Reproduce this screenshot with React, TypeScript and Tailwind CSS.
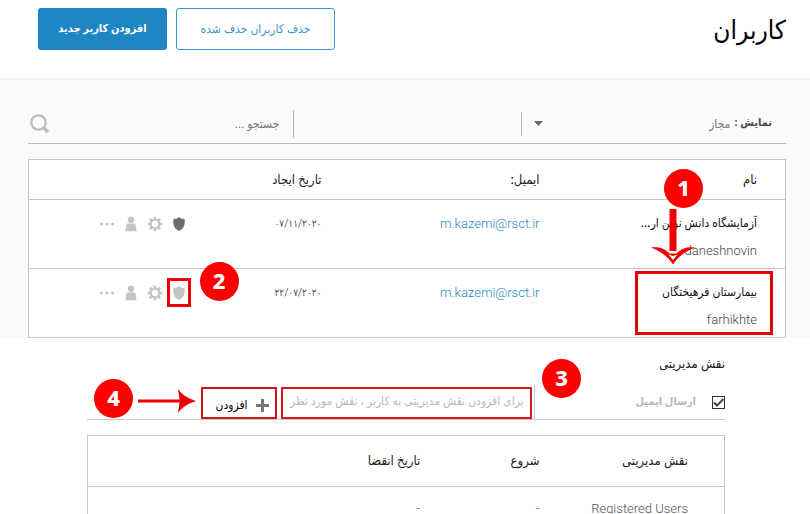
import type { ReactNode } from "react";
import clsx from "clsx";

const users = [
  { name: "آزمایشگاه دانش نوین ار...", login: "daneshnovin", email: "m.kazemi@rsct.ir", created: "۰۷/۱۱/۲۰۲۰", admin: true },
  { name: "بیمارستان فرهیختگان", login: "farhikhte", email: "m.kazemi@rsct.ir", created: "۲۲/۰۷/۲۰۲۰", admin: false },
];

function StepBadge({ className, children }: { className: string; children: ReactNode }) {
  return (
    <span
      className={clsx(
        "absolute z-10 flex size-[39px] items-center justify-center rounded-full bg-[#fe0000] pb-1 font-['Noto_Sans'] text-[22px] leading-none font-extrabold text-white",
        className,
      )}
    >
      {children}
    </span>
  );
}

function ShieldIcon() {
  return (
    <svg viewBox="0 0 12 14" className="h-[14px] w-3" fill="currentColor">
      <path d="M6 0 7.2.9C8.500 1.700 9.800 2 11.600 2.100c.3 2.600.2 5.200-.8 7.500C9.900 11.600 8.300 13 6 14 3.700 13 2.100 11.600 1.200 9.600.2 7.300.1 4.700.4 2.100 2.200 2 3.500 1.700 4.800.9z" />
    </svg>
  );
}

function GearIcon() {
  return (
    <svg viewBox="0 0 16 16" className="size-4">
      <circle cx="8" cy="8" r="4.300" fill="none" stroke="currentColor" strokeWidth="2.300" />
      {[0, 45, 90, 135, 180, 225, 270, 315].map((angle) => (
        <path key={angle} d="M6.600.7h2.800l-.3 2.600H6.900z" fill="currentColor" transform={`rotate(${angle} 8 8)`} />
      ))}
    </svg>
  );
}

function PersonIcon() {
  return (
    <svg viewBox="0 0 12 16" className="h-4 w-3" fill="currentColor">
      <circle cx="6" cy="3.700" r="3.100" />
      <path d="M4.700 6h2.600v1.300H4.700z" />
      <path d="M2.700 7.500h6.600c.7 0 1.100.5 1.300 1.200L11.600 15.300H.4L1.400 8.700c.2-.7.6-1.200 1.300-1.200z" />
    </svg>
  );
}

function DotsIcon() {
  return (
    <svg viewBox="0 0 16 16" className="size-4" fill="currentColor">
      <circle cx="2.500" cy="8" r="1.500" />
      <circle cx="8" cy="8" r="1.500" />
      <circle cx="13.500" cy="8" r="1.500" />
    </svg>
  );
}

function UserRow({ user }: { user: (typeof users)[number] }) {
  return (
    <tr className="border-b border-[#c6c6c6] align-top">
      <td className="relative pt-[10px] pr-7 pb-1">
        <div className="text-xs leading-[27px] font-medium whitespace-nowrap text-[#111]">{user.name}</div>
        <div className="text-[13px] leading-[27px] font-light text-[#444]">{user.login}</div>
        {user.admin ? (
          <>
            <StepBadge className="-top-[31px] right-[82px]">1</StepBadge>
            <svg viewBox="0 0 44 56" className="absolute top-[9px] right-[90px] h-14 w-11">
              <path d="M18.500 0h7v42h-7z" fill="#f00000" />
              <path d="M0 38.500c8-.8 13.500 1 18.500 6h7C30.500 39.500 36 37.700 44 38.500 35 42 28 46.500 22 55.500 16 46.500 9 42 0 38.500z" fill="#f00000" />
              <path d="M17.500 45.500 22 47l4.500-1.500L22 51z" fill="#fff" />
            </svg>
          </>
        ) : (
          <span className="pointer-events-none absolute top-[2px] right-3 h-[64px] w-[138px] border-[3px] border-[#ea0008]" />
        )}
      </td>
      <td className="pt-[10px] pr-7 text-[13px] leading-[27px]">
        <a href="#email" className="font-light text-[#1e87c3]">
          {user.email}
        </a>
      </td>
      <td className="pt-[10px] pr-7 text-[10px] leading-[27px] text-[#555]">{user.created}</td>
      <td className="relative pt-[10px]">
        <div className="flex h-[27px] items-center gap-2 pr-[19px] text-[#c4c4c4]">
          <button aria-label="نقش مدیریتی" className={clsx("flex w-4 justify-center", user.admin && "text-[#6b6f6f]")}>
            <ShieldIcon />
          </button>
          <button aria-label="تنظیمات">
            <GearIcon />
          </button>
          <button aria-label="پروفایل" className="flex w-4 justify-center">
            <PersonIcon />
          </button>
          <button aria-label="بیشتر">
            <DotsIcon />
          </button>
        </div>
        {!user.admin && (
          <>
            <span className="pointer-events-none absolute top-[9px] right-[15px] h-[29px] w-6 border-[3px] border-[#ea0008]" />
            <StepBadge className="-top-[7px] -right-[33px]">2</StepBadge>
          </>
        )}
      </td>
    </tr>
  );
}

export default function App() {
  return (
    <div dir="rtl" className="h-screen overflow-hidden bg-white font-['Roboto','DejaVu_Sans_Condensed','DejaVu_Sans',sans-serif] text-xs text-[#222]">
      <header className="flex items-start justify-between border-b-2 border-[#f0f0f0] pr-6 pb-7 pl-[38px]">
        <h1 className="pt-3 text-[26px] leading-9 font-medium text-black">کاربران</h1>
        <div className="flex gap-[9px] pt-2">
          <button className="h-[42px] w-[159px] rounded-[3px] border border-[#3d97cb] text-xs text-[#3d97cb]">حذف کاربران حذف شده</button>
          <button className="h-[42px] w-[129px] rounded-[3px] bg-[#1e87c3] text-[11px] font-bold text-white">افزودن کاربر جدید</button>
        </div>
      </header>

      <section className="bg-[#fafafa] pt-6 pr-6 pl-7">
        <div className="flex h-10 items-center border-b border-[#b9b9b9]">
          <label className="flex w-[35%] items-center border-l border-[#b9b9b9] pr-[14px] text-[#4a4444]">
            <span className="text-[11px] font-bold">نمایش :</span>
            <select className="h-6 flex-1 appearance-none bg-transparent pr-1 text-xs text-[#777] outline-none">
              <option>مجاز</option>
            </select>
            <svg viewBox="0 0 9 5" className="ml-3 h-[5px] w-[9px]" fill="#666">
              <path d="M0 0h9L4.500 5z" />
            </svg>
          </label>
          <div className="h-7 w-[30%] border-l border-[#b9b9b9]" />
          <input type="search" aria-label="جستجو" placeholder="جستجو ..." className="min-w-0 flex-1 bg-transparent pr-[14px] text-xs outline-none placeholder:text-[#777]" />
          <button aria-label="جستجو" className="ml-[2px]">
            <svg viewBox="0 0 20 20" className="size-5" fill="none" stroke="#bdbdbd">
              <circle cx="8.500" cy="8.500" r="7.200" strokeWidth="2.300" />
              <path d="m14 14 4 4" strokeWidth="3.500" />
            </svg>
          </button>
        </div>

        <table className="mt-[15px] w-full table-fixed border-x border-t border-[#c6c6c6] bg-white text-right">
          <thead>
            <tr className="h-10 border-b border-[#c6c6c6] text-[13px]">
              <th className="w-[28.8%] pr-7 font-medium">نام</th>
              <th className="w-[28.8%] pr-7 font-medium">ایمیل:</th>
              <th className="w-[19%] pr-7 font-medium">تاریخ ایجاد</th>
              <th aria-label="عملیات" />
            </tr>
          </thead>
          <tbody>
            {users.map((user) => (
              <UserRow key={user.login} user={user} />
            ))}
          </tbody>
        </table>
      </section>

      <section className="pt-[14px] pr-[85px] pl-[87px]">
        <h2 className="text-[13px] leading-6 font-medium">نقش مدیریتی</h2>
        <form className="relative mt-[9px] flex h-[35px] items-end border-b border-[#c6c6c6]">
          <label className="flex h-full w-[30%] items-center gap-4 border-l border-[#c6c6c6] text-[11px] font-bold text-[#b8b8b8]">
            <span className="relative flex">
              <input
                type="checkbox"
                defaultChecked
                className="size-[13px] appearance-none border border-[#333] bg-white"
              />
              <svg viewBox="0 0 13 13" className="pointer-events-none absolute inset-0 size-[13px]" fill="none" stroke="#444" strokeWidth="2">
                <path d="m2 6.500 3 3 6.500-6.500" />
              </svg>
            </span>
            ارسال ایمیل
          </label>
          <input
            type="text"
            aria-label="نقش"
            placeholder="برای افزودن نقش مدیریتی به کاربر ، نقش مورد نظر"
            className="mr-[2px] h-8 w-[251px] border-2 border-[#d9151b] pr-[6px] pb-1 text-xs outline-none placeholder:text-[#bababa]"
          />
          <button type="button" className="mr-1 flex h-8 w-[76px] items-center gap-2 border-2 border-[#c9181d] pt-1 pr-[6px] text-xs font-medium text-black">
            <svg viewBox="0 0 13 13" className="size-[13px]" fill="none" stroke="#777" strokeWidth="3">
              <path d="M6.500 0v13M0 6.500h13" />
            </svg>
            افزودن
          </button>
          <StepBadge className="-top-[26px] right-36">3</StepBadge>
          <svg viewBox="0 0 58 24" className="absolute top-1 left-[51px] h-6 w-[58px]" fill="#ef0000">
            <path d="M0 10.500h46v3H0z" />
            <path d="M40 0C44 5.500 49 9 58 12 49 15 44 18.500 40 24c.6-5 1.500-8 1.500-12 0-4-.9-7-1.500-12z" />
          </svg>
          <StepBadge className="-top-[6px] left-[7px]">4</StepBadge>
        </form>

        <table className="mt-[15px] w-full table-fixed border border-[#c6c6c6] text-right">
          <thead>
            <tr className="h-[51px] border-b border-[#c6c6c6] text-[13px]">
              <th className="w-[23.4%] pr-9 font-medium whitespace-nowrap">نقش مدیریتی</th>
              <th className="w-[18.7%] pr-9 font-medium">شروع</th>
              <th className="pr-9 font-medium">تاریخ انقضا</th>
            </tr>
          </thead>
          <tbody>
            <tr className="h-11 text-[13px] font-light text-[#555]">
              <td className="pr-9 whitespace-nowrap">Registered Users</td>
              <td className="pr-9">-</td>
              <td className="pr-9">-</td>
            </tr>
          </tbody>
        </table>
      </section>
    </div>
  );
}
